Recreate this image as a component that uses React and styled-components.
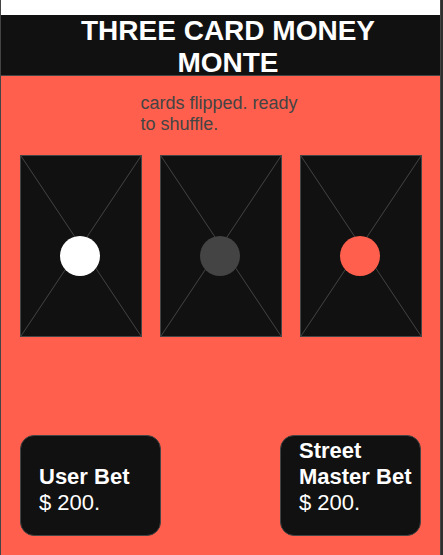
import React from "react";
import styled, { createGlobalStyle } from "styled-components";

const RED = "#ff5f4c";
const INK = "#111111";
const LINE = "#444444";

const GlobalStyle = createGlobalStyle`
  html, body {
    margin: 0;
    padding: 0;
    background: #2e2e2e;
    font-family: "Liberation Sans", Arial, sans-serif;
  }
  * { box-sizing: border-box; }
`;

const Frame = styled.div`
  width: 441px;
  min-height: 555px;
  border-left: 1px solid ${LINE};
  border-right: 1px solid ${LINE};
  display: flex;
  flex-direction: column;
  background: ${RED};
`;

const TopStrip = styled.div`
  height: 15px;
  background: #ffffff;
`;

const Header = styled.header`
  height: 61px;
  padding-left: 15px;
  background: ${INK};
  border-bottom: 1px solid ${LINE};
  color: #ffffff;
  text-align: center;
`;

const Title = styled.h1`
  max-width: 320px;
  margin: 0 auto;
  font-size: 28px;
  font-weight: 700;
  line-height: normal;
`;

const Main = styled.main`
  flex: 1;
  display: flex;
  flex-direction: column;
  padding-top: 17px;
`;

const Message = styled.p`
  width: 160px;
  margin: 0 auto;
  color: #444444;
  font-size: 18px;
  line-height: normal;
`;

const CardRow = styled.div`
  display: flex;
  gap: 18px;
  padding: 0 18px 0 19px;
  margin-top: 20px;
`;

const Card = styled.div`
  position: relative;
  width: 122px;
  height: 182px;
  background: ${INK};
  border: 1px solid ${LINE};
`;

const CardLines = styled.svg`
  display: block;
  width: 120px;
  height: 180px;
`;

const Chip = styled.span`
  position: absolute;
  top: 80px;
  left: 39px;
  width: 40px;
  height: 40px;
  border-radius: 50%;
  background: ${(p) => p.$color};
`;

const BetRow = styled.div`
  display: flex;
  justify-content: space-between;
  padding: 0 19px;
  margin-top: 98px;
`;

const BetBox = styled.div`
  width: 141px;
  height: 101px;
  background: ${INK};
  border: 1px solid ${LINE};
  border-radius: 14px;
  padding: 0 0 19px 18px;
  display: flex;
  flex-direction: column;
  justify-content: flex-end;
  color: #ffffff;
  font-size: 22px;
  line-height: normal;
`;

const BetLabel = styled.div`
  font-weight: 700;
`;

const BetAmount = styled.div`
  font-weight: 400;
`;

const cards = [
  { id: 1, color: "#ffffff" },
  { id: 2, color: "#444444" },
  { id: 3, color: RED },
];

export default function App() {
  return (
    <>
      <GlobalStyle />
      <Frame>
        <TopStrip />
        <Header>
          <Title>THREE CARD MONEY MONTE</Title>
        </Header>
        <Main>
          <Message>cards flipped. ready to shuffle.</Message>
          <CardRow>
            {cards.map((c) => (
              <Card key={c.id}>
                <CardLines viewBox="0 0 120 180">
                  <line x1="0" y1="0" x2="120" y2="180" stroke={LINE} strokeWidth="1" />
                  <line x1="120" y1="0" x2="0" y2="180" stroke={LINE} strokeWidth="1" />
                </CardLines>
                <Chip $color={c.color} />
              </Card>
            ))}
          </CardRow>
          <BetRow>
            <BetBox>
              <BetLabel>User Bet</BetLabel>
              <BetAmount>$ 200.</BetAmount>
            </BetBox>
            <BetBox>
              <BetLabel>Street Master Bet</BetLabel>
              <BetAmount>$ 200.</BetAmount>
            </BetBox>
          </BetRow>
        </Main>
      </Frame>
    </>
  );
}
